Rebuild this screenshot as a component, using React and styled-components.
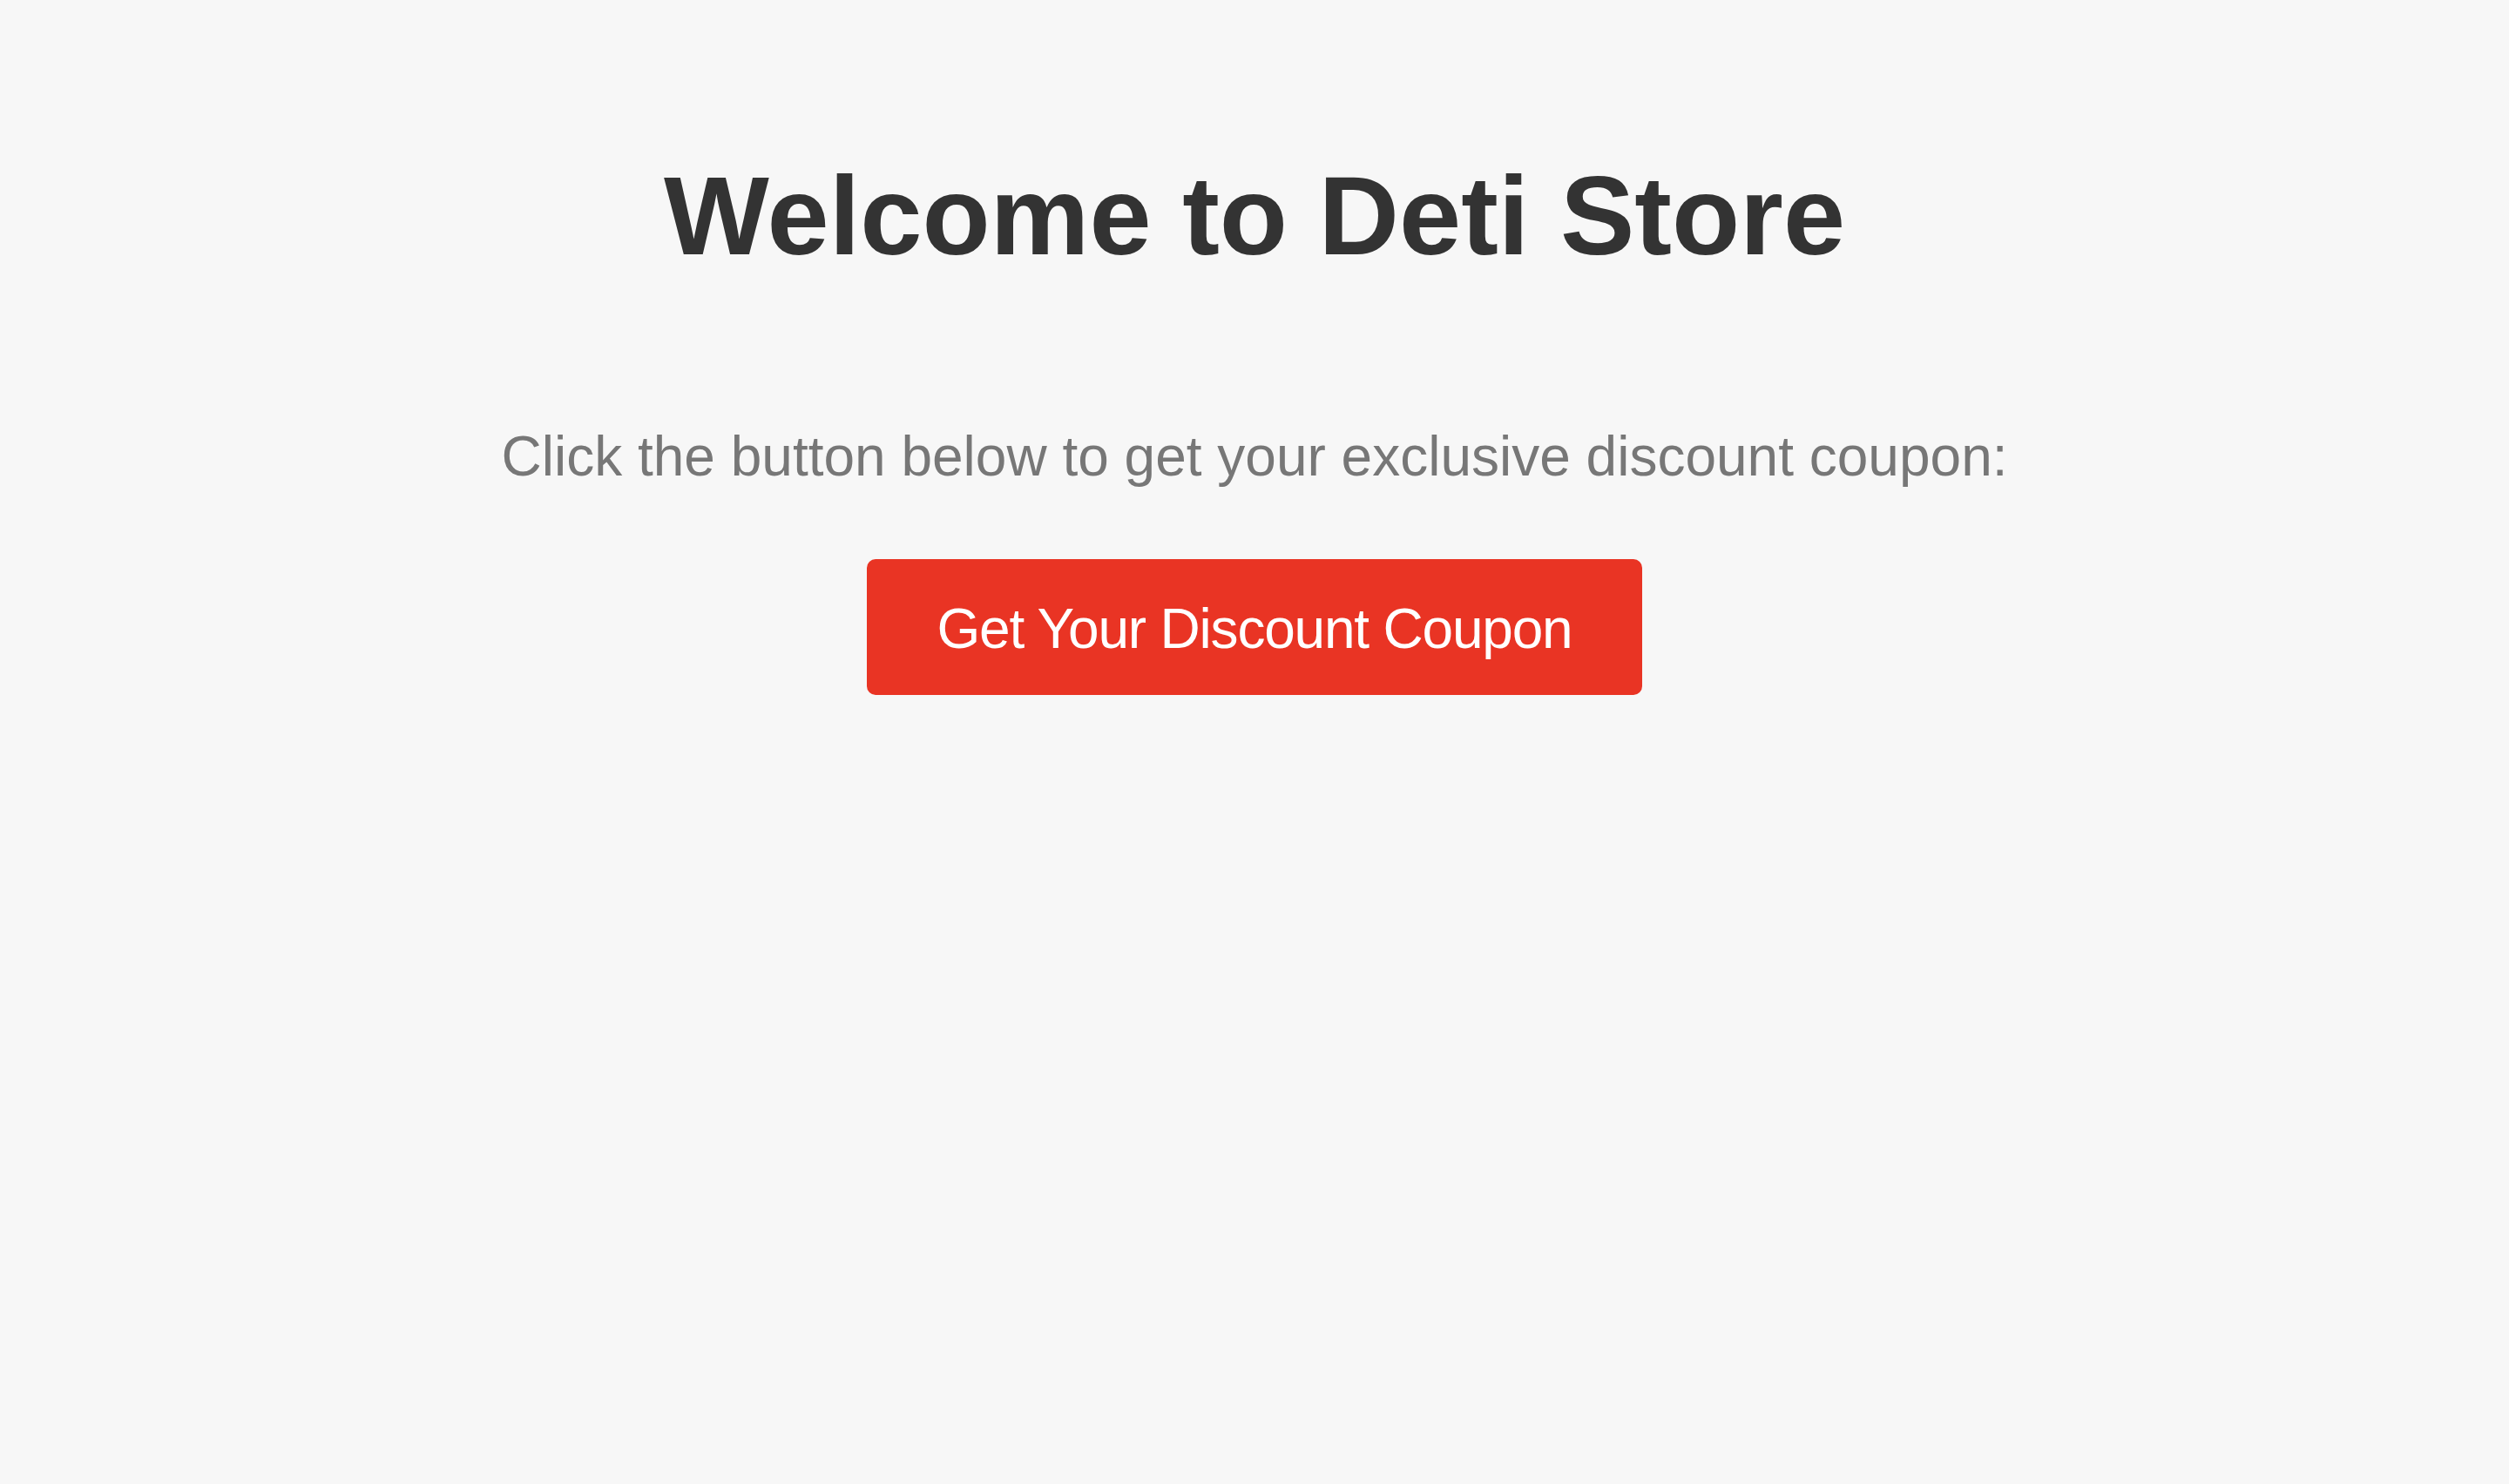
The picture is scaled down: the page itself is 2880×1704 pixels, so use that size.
import React from "react";
import styled, { createGlobalStyle } from "styled-components";

const GlobalStyle = createGlobalStyle`
  html, body {
    margin: 0;
    padding: 0;
    background: #f7f7f7;
  }
  body {
    font-family: "Liberation Sans", Arial, Helvetica, sans-serif;
    min-height: 100vh;
  }
`;

const Page = styled.main`
  display: flex;
  flex-direction: column;
  align-items: center;
  text-align: center;
  padding-top: 174px;
  min-height: 100vh;
  box-sizing: border-box;
`;

const Title = styled.h1`
  margin: 0;
  font-size: 128px;
  line-height: 148px;
  font-weight: 700;
  color: #333333;
`;

const Lead = styled.p`
  margin: 165px 0 0;
  font-size: 64px;
  line-height: 74px;
  color: #777777;
`;

const CouponButton = styled.button`
  margin-top: 81px;
  padding: 42px 80px 38px;
  border: none;
  border-radius: 10px;
  background: #e93424;
  color: #ffffff;
  font-family: "Liberation Sans", Arial, Helvetica, sans-serif;
  font-size: 64px;
  line-height: 76px;
  letter-spacing: -1.2px;
  cursor: pointer;

  &:hover {
    background: #d42c1d;
  }
`;

export default function App() {
  const handleClick = () => {
    // coupon flow would go here
  };

  return (
    <>
      <GlobalStyle />
      <Page>
        <Title>Welcome to Deti Store</Title>
        <Lead>Click the button below to get your exclusive discount coupon:</Lead>
        <CouponButton onClick={handleClick}>Get Your Discount Coupon</CouponButton>
      </Page>
    </>
  );
}
